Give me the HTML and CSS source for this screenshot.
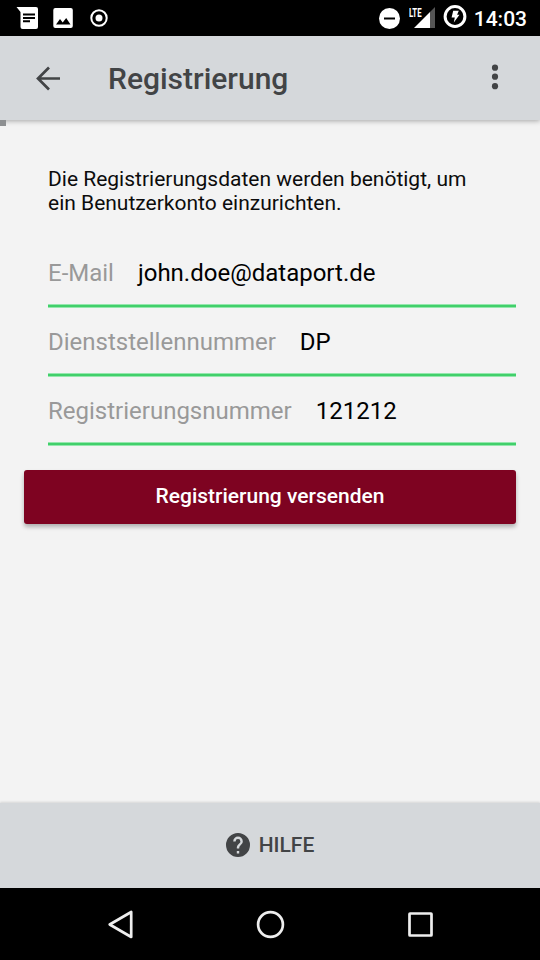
FILE: index.html
```html
<!DOCTYPE html>
<html lang="de">
<head>
<meta charset="utf-8">
<title>Registrierung</title>
<link rel="stylesheet" href="styles.css">
</head>
<body>
<div class="screen">
  <div class="status">
    <svg class="status-left" width="110" height="36" viewBox="0 0 110 36">
      <path fill="#fff" d="M16.500 7H36q2 0 2 2v18q0 2-2 2H22.500q-2 0-2-2V12z"/>
      <path stroke="#000" stroke-width="2" d="M23 14.500h12M23 18h12M23 21.300h7"/>
      <rect x="53.300" y="8" width="19.500" height="20" rx="2" fill="#fff"/>
      <path d="M56 24.500l4-5.500 2.700 3.500 3.500-4.500 4.300 6.500z"/>
      <circle cx="99" cy="18" r="7.700" fill="none" stroke="#fff" stroke-width="2"/>
      <circle cx="99" cy="18" r="3.500" fill="#fff"/>
    </svg>
    <div class="status-right">
      <svg width="22" height="36" viewBox="0 0 22 36"><circle cx="11.500" cy="18.500" r="10.500" fill="#fff"/><path stroke="#000" stroke-width="2" d="M6 18.500h11"/></svg>
      <div class="signal">
        <svg width="27" height="36" viewBox="0 0 27 36"><path fill="#fff" d="M5 28L21 12v16z"/><path fill="#555" d="M21 12l5-5v21h-5z"/></svg>
        <span class="lte">LTE</span>
      </div>
      <svg class="battery" width="24" height="36" viewBox="0 0 24 36"><circle cx="12" cy="16.500" r="9.900" fill="none" stroke="#fff" stroke-width="3"/><path fill="#fff" d="M10.200 10.800h5.600l-1.700 4h2.400L10.800 22.500l1-5H8.600z"/></svg>
      <span class="time">14:03</span>
    </div>
  </div>
  <header class="toolbar">
    <svg class="back" width="24" height="26" viewBox="0 0 24 26"><path fill="none" stroke="#424446" stroke-width="2.700" d="M24 13.500H2M13 2.500L2 13.500l11 11"/></svg>
    <h1>Registrierung</h1>
    <svg class="more" width="8" height="30" viewBox="0 0 8 30" fill="#424446"><circle cx="4" cy="4.700" r="3.100"/><circle cx="4" cy="13.700" r="3.100"/><circle cx="4" cy="23.200" r="3.100"/></svg>
  </header>
  <main>
    <div class="progress"></div>
    <p class="intro">Die Registrierungsdaten werden benötigt, um ein Benutzerkonto einzurichten.</p>
    <div class="fields">
      <div class="field"><span class="label">E-Mail</span><span>john.doe@dataport.de</span></div>
      <div class="field"><span class="label">Dienststellennummer</span><span>DP</span></div>
      <div class="field"><span class="label">Registrierungsnummer</span><span>121212</span></div>
    </div>
    <button class="send">Registrierung versenden</button>
  </main>
  <footer class="help">
    <svg width="24" height="24" viewBox="0 0 24 24"><path fill="#424446" d="M12 0a12 12 0 1 0 0 24a12 12 0 1 0 0-24zm1.200 20.400h-2.400V18h2.400zm2.480-9.300l-1.080 1.110c-.86.870-1.400 1.590-1.400 3.390h-2.400V15c0-1.320.54-2.520 1.400-3.390l1.500-1.510c.43-.43.700-1.030.700-1.700a2.400 2.400 0 0 0-4.800 0H7.200a4.800 4.800 0 0 1 9.600 0c0 1.060-.43 2.010-1.120 2.700z"/></svg>
    <span>HILFE</span>
  </footer>
  <nav class="nav">
    <svg width="30" height="30" viewBox="0 0 30 30"><path d="M4.700 15.500L26.200 3v25z"/></svg>
    <svg width="30" height="30" viewBox="0 0 30 30"><circle cx="15.500" cy="15.500" r="12.400"/></svg>
    <svg width="30" height="30" viewBox="0 0 30 30"><rect x="4.500" y="4.500" width="22" height="22" rx="0.500"/></svg>
  </nav>
</div>
</body>
</html>
```
FILE: styles.css
```css
* { box-sizing: border-box; }
body {
  margin: 0;
  font-family: Roboto, "Liberation Sans", sans-serif;
  background: #f3f3f3;
  color: #0c0c0c;
}
.screen {
  width: 540px;
  height: 960px;
  display: flex;
  flex-direction: column;
  overflow: hidden;
}
.status {
  height: 36px;
  background: #000;
  color: #fff;
  display: flex;
  justify-content: space-between;
  padding-right: 13px;
}
.status-right { display: flex; }
.status svg { display: block; }
.signal { position: relative; margin-left: 9px; }
.lte {
  position: absolute;
  left: 0;
  top: 6px;
  font-size: 13px;
  line-height: 13px;
  font-weight: 700;
  transform: scaleX(.6);
  transform-origin: left;
}
.battery { margin-left: 7.500px; }
.time {
  margin-left: 6.500px;
  font-size: 21px;
  line-height: 38px;
  font-weight: 500;
}
.toolbar {
  height: 84px;
  background: #d5d8db;
  display: flex;
  align-items: center;
  padding: 0 41px 0 36px;
  color: #424446;
  box-shadow: 0 1px 5px rgba(0, 0, 0, .32);
  z-index: 1;
}
.toolbar h1 {
  flex: 1;
  margin: 0 0 0 48px;
  padding-top: 2px;
  font-size: 30px;
  font-weight: 500;
  line-height: 36px;
}
main {
  flex: 1;
  padding: 0 24px;
}
.progress {
  width: 6px;
  height: 6px;
  margin-left: -24px;
  background: #8d8f91;
  position: relative;
  z-index: 2;
}
.intro {
  margin: 41px 24px 0;
  font-size: 21px;
  line-height: 24px;
}
.fields { margin: 24px 0 0 24px; }
.field {
  height: 69px;
  padding-top: 16px;
  display: flex;
  gap: 24px;
  font-size: 24px;
  line-height: 36px;
  background: linear-gradient(#94e7ad 1px, #41cf6a 1px, #41cf6a 3px, #94e7ad 3px) bottom / 100% 4px no-repeat;
  color: #000;
}
.label { color: #999; }
.send {
  display: block;
  width: 100%;
  height: 54px;
  margin-top: 23.500px;
  padding: 0 0 1px;
  border: 0;
  border-radius: 3px;
  background: #7e0321;
  color: #fff;
  font: 500 21px/53px Roboto, "Liberation Sans", sans-serif;
  box-shadow: 0 3px 4px rgba(0, 0, 0, .28);
}
.help {
  height: 85px;
  background: #d5d8db;
  box-shadow: 0 -1px 2px rgba(0, 0, 0, .12);
  display: flex;
  align-items: center;
  justify-content: center;
  gap: 9px;
  padding: 0 0 1px;
  font-size: 21px;
  font-weight: 500;
  color: #424446;
}
.nav {
  height: 72px;
  background: #000;
  display: flex;
  align-items: center;
  justify-content: center;
  gap: 120px;
}
.nav svg { fill: none; stroke: #eee; stroke-width: 2.700px; stroke-linejoin: round; }
```
